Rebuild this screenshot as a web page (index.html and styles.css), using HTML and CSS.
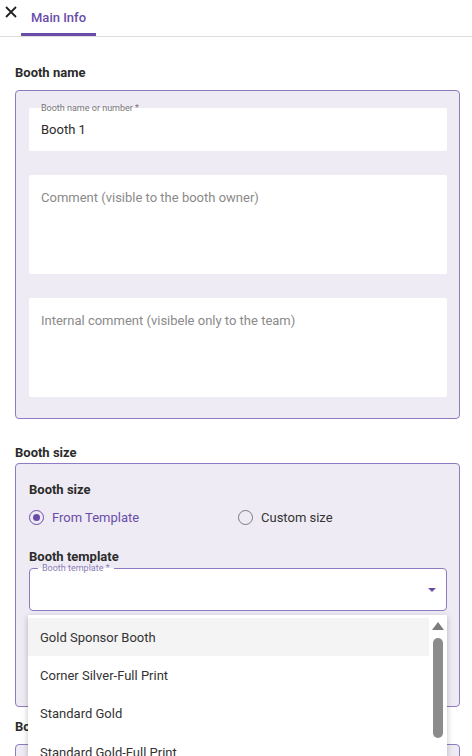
FILE: index.html
```html
<!DOCTYPE html>
<html lang="en">
<head>
    <meta charset="UTF-8">
    <meta name="viewport" content="width=device-width, initial-scale=1.0">
    <title>Booth</title>
    <link rel="stylesheet" href="styles.css">
</head>
<body>
    <div class="top-bar">
        <button class="close-button" aria-label="Close">
            <svg width="12" height="12" viewBox="0 0 12 12"><path d="M1 1L11 11M11 1L1 11" stroke="#222" stroke-width="1.8" fill="none"/></svg>
        </button>
        <div class="tab active">Main Info</div>
    </div>

    <div class="content">
        <h3 class="section-title">Booth name</h3>
        <div class="section-box">
            <div class="field short">
                <span class="field-label">Booth name or number *</span>
                <div class="field-value">Booth 1</div>
            </div>
            <div class="field tall">
                <div class="placeholder">Comment (visible to the booth owner)</div>
            </div>
            <div class="field tall">
                <div class="placeholder">Internal comment (visibele only to the team)</div>
            </div>
        </div>

        <h3 class="section-title gap-top">Booth size</h3>
        <div class="section-box size-box">
            <h4 class="sub-title">Booth size</h4>
            <div class="radio-row">
                <label class="radio checked"><span class="radio-dot"></span>From Template</label>
                <label class="radio"><span class="radio-dot"></span>Custom size</label>
            </div>
            <h4 class="sub-title template-title">Booth template</h4>
            <div class="select-field">
                <span class="select-label">Booth template *</span>
                <span class="select-arrow"></span>
            </div>

            <div class="dropdown">
                <div class="dropdown-list">
                    <div class="dropdown-item hover">Gold Sponsor Booth</div>
                    <div class="dropdown-item">Corner Silver-Full Print</div>
                    <div class="dropdown-item">Standard Gold</div>
                    <div class="dropdown-item">Standard Gold-Full Print</div>
                </div>
                <div class="scrollbar">
                    <span class="scroll-up"></span>
                    <span class="scroll-thumb"></span>
                </div>
            </div>
        </div>

        <h3 class="section-title next-title">Booth location</h3>
        <div class="section-box next-box"></div>
    </div>
</body>
</html>
```

FILE: styles.css
```css
body {
    margin: 0;
    font-family: Roboto, "Noto Sans", Arial, sans-serif;
    font-size: 13px;
    color: #2b2b2b;
    background-color: #fff;
    height: 756px;
    overflow: hidden;
}
.top-bar {
    display: flex;
    align-items: flex-start;
    height: 36px;
    border-bottom: 1px solid #dedede;
}
.close-button {
    background: none;
    border: none;
    padding: 0;
    margin: 6px 0 0 5px;
    width: 12px;
    height: 12px;
    cursor: pointer;
    display: flex;
}
.tab {
    margin-left: 4px;
    padding: 10px 10px 0 10px;
    height: 23px;
    color: #6a4da8;
    font-weight: 500;
    font-size: 13px;
    border-bottom: 3px solid #6a4da8;
}
.content {
    padding: 0 12px 0 15px;
    position: relative;
}
.section-title {
    font-size: 13px;
    font-weight: 700;
    margin: 28px 0 9px 0;
    line-height: 16px;
}
.section-title.gap-top {
    margin-top: 26px;
    margin-bottom: 2px;
}
.section-box {
    border: 1px solid #8f7bc1;
    border-radius: 4px;
    background-color: #efebf4;
    padding: 17px 12px 21px 13px;
    display: flex;
    flex-direction: column;
    gap: 24px;
}
.field {
    background-color: #fff;
    border-radius: 2px;
    position: relative;
    padding: 0 12px;
}
.field.short {
    height: 43px;
    display: flex;
    align-items: center;
}
.field.tall {
    height: 99px;
}
.field-label {
    position: absolute;
    left: 12px;
    top: -5px;
    font-size: 9px;
    color: #777;
    line-height: 10px;
}
.field-value {
    padding-top: 0;
}
.placeholder {
    color: #8a8a8a;
    padding-top: 15px;
}
.size-box {
    display: block;
    height: 203px;
    padding-top: 18px;
    position: relative;
}
.sub-title {
    font-size: 13px;
    font-weight: 700;
    margin: 0;
    line-height: 16px;
}
.radio-row {
    display: grid;
    grid-template-columns: 1fr 1fr;
    margin-top: 12px;
}
.radio {
    display: flex;
    align-items: center;
    gap: 8px;
    color: #333;
}
.radio.checked {
    color: #6a4da8;
}
.radio-dot {
    width: 13px;
    height: 13px;
    border: 1.5px solid #7a7a7a;
    border-radius: 50%;
    display: flex;
    align-items: center;
    justify-content: center;
}
.radio.checked .radio-dot {
    border-color: #6a4da8;
}
.radio.checked .radio-dot::after {
    content: "";
    width: 7px;
    height: 7px;
    border-radius: 50%;
    background-color: #6a4da8;
}
.template-title {
    margin-top: 24px;
}
.select-field {
    position: relative;
    height: 41px;
    margin-top: 3px;
    background-color: #fff;
    border: 1px solid #8f7bc1;
    border-radius: 4px;
}
.select-label {
    position: absolute;
    left: 8px;
    top: -6px;
    padding: 0 4px;
    font-size: 9px;
    line-height: 10px;
    color: #8a7db8;
    background: linear-gradient(#efebf4 50%, #fff 50%);
}
.select-arrow {
    position: absolute;
    right: 10px;
    top: 19px;
    border-left: 4px solid transparent;
    border-right: 4px solid transparent;
    border-top: 4px solid #6a4da8;
}
.dropdown {
    position: absolute;
    left: 12px;
    top: 151px;
    width: 419px;
    height: 160px;
    background-color: #fff;
    box-shadow: 0 2px 6px rgba(0, 0, 0, 0.25);
    display: flex;
    z-index: 5;
    padding-top: 3px;
}
.dropdown-list {
    flex: 1;
}
.dropdown-item {
    height: 38.3px;
    display: flex;
    align-items: center;
    padding-left: 12px;
    color: #333;
}
.dropdown-item.hover {
    background-color: #f4f4f4;
}
.scrollbar {
    width: 18px;
    display: flex;
    flex-direction: column;
    align-items: center;
    padding-top: 4px;
}
.scroll-up {
    border-left: 6px solid transparent;
    border-right: 6px solid transparent;
    border-bottom: 8px solid #7c7c7c;
}
.scroll-thumb {
    margin-top: 8px;
    width: 10px;
    height: 100px;
    border-radius: 5px;
    background-color: #8c8c8c;
}
.next-title {
    margin-top: 12px;
    margin-bottom: 9px;
}
.next-box {
    height: 40px;
    padding: 0;
}
```
